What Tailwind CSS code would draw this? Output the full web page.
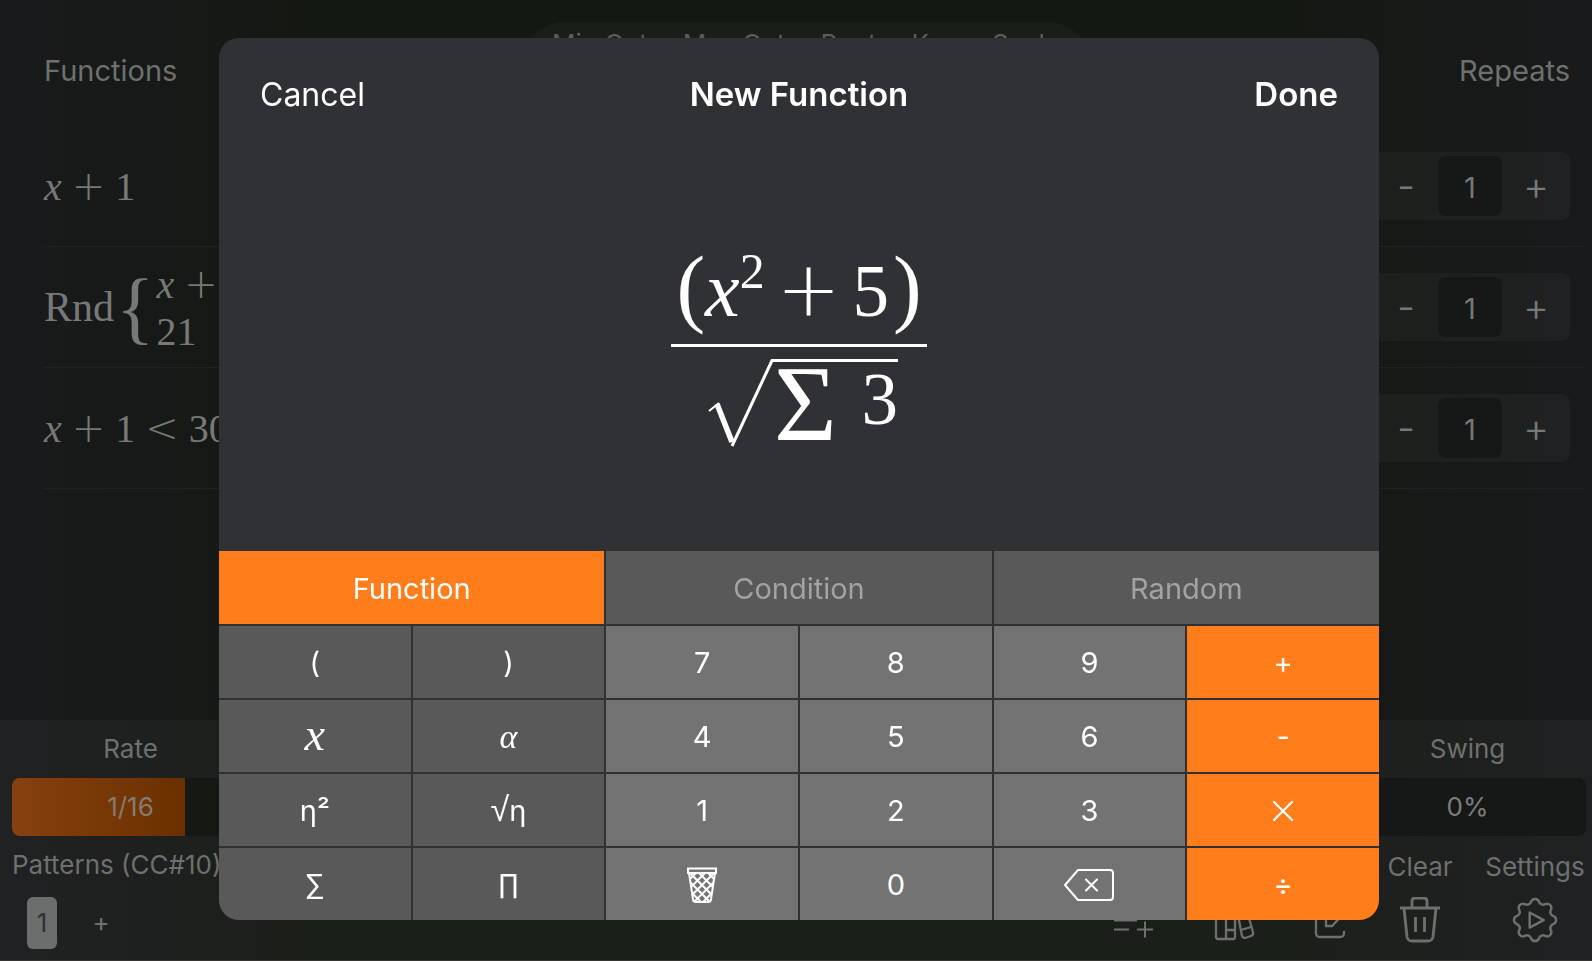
<!DOCTYPE html>
<html lang="en">
<head>
  <meta charset="UTF-8">
  <meta name="viewport" content="width=device-width, initial-scale=1.0">
  <title>New Function</title>
  <script src="https://cdn.jsdelivr.net/npm/@tailwindcss/browser@4"></script>
</head>
<body class="font-['Inter',sans-serif] text-[#6e706e]">
  <main class="relative flex min-h-screen flex-col overflow-hidden border-b border-[#36352f] bg-linear-to-r from-[#191a1c] via-[#141812] via-20% to-[#141812] to-80%">
    <div class="absolute inset-y-0 right-0 w-1/5 bg-linear-to-r from-[#141812] to-[#191a1c]"></div>

    <!-- scale settings pill -->
    <div class="absolute top-[22px] right-[500px] left-[520px] flex h-[90px] justify-between rounded-[45px] bg-[#1a1e18] px-8 pt-2 text-[26px] leading-[28px] text-[#5a5d58]">
      <span>Min Oct</span><span>Max Oct</span><span>Root</span><span>Key</span><span>Scale</span>
    </div>

    <!-- function list -->
    <section class="relative pl-[44px] pr-[6px]">
      <header class="flex h-[126px] items-center justify-between pr-4 pt-[16px] text-[29px]">
        <h2>Functions</h2>
        <h2>Repeats</h2>
      </header>
      <ul>
        <li class="flex h-[121px] items-center justify-between border-b border-[#1f2220] pr-4">
          <div class="font-['Liberation_Serif',serif] text-[40px] text-[#777976]"><i>x</i> <span class="font-['DejaVu_Sans',sans-serif] font-extralight">+</span> 1</div>
          <div class="grid h-[68px] w-[200px] grid-cols-3 rounded-lg bg-white/3 p-1 text-[29px] text-[#777977]">
            <button class="text-[40px] leading-none font-light" aria-label="Fewer">-</button>
            <output class="flex items-center justify-center rounded-lg bg-[#161817] pt-1">1</output>
            <button class="pl-1 text-[40px] leading-none font-light" aria-label="More">+</button>
          </div>
        </li>
        <li class="flex h-[121px] items-center justify-between border-b border-[#1f2220] pr-4">
          <div class="flex items-center gap-0.5 font-['Liberation_Serif',serif] text-[40px] text-[#777976]">
            <span class="text-[42px]">Rnd</span>
            <span class="text-[80px] leading-[100px]">{</span>
            <span class="pt-0.5 leading-[47px] whitespace-nowrap"><i>x</i> <span class="font-['DejaVu_Sans',sans-serif] font-extralight">+</span> 1<br>21</span>
          </div>
          <div class="grid h-[68px] w-[200px] grid-cols-3 rounded-lg bg-white/3 p-1 text-[29px] text-[#777977]">
            <button class="text-[40px] leading-none font-light" aria-label="Fewer">-</button>
            <output class="flex items-center justify-center rounded-lg bg-[#161817] pt-1">1</output>
            <button class="pl-1 text-[40px] leading-none font-light" aria-label="More">+</button>
          </div>
        </li>
        <li class="flex h-[121px] items-center justify-between border-b border-[#1f2220] pr-4">
          <div class="font-['Liberation_Serif',serif] text-[40px] text-[#777976]"><i>x</i> <span class="font-['DejaVu_Sans',sans-serif] font-extralight">+</span> 1 <span class="font-['DejaVu_Sans',sans-serif] font-extralight">&lt;</span> 30</div>
          <div class="grid h-[68px] w-[200px] grid-cols-3 rounded-lg bg-white/3 p-1 text-[29px] text-[#777977]">
            <button class="text-[40px] leading-none font-light" aria-label="Fewer">-</button>
            <output class="flex items-center justify-center rounded-lg bg-[#161817] pt-1">1</output>
            <button class="pl-1 text-[40px] leading-none font-light" aria-label="More">+</button>
          </div>
        </li>
      </ul>
    </section>

    <!-- bottom panel -->
    <footer class="relative mt-auto h-[240px] bg-white/3 px-3 pr-[6px] text-[26px]">
      <div class="flex justify-between">
        <div class="relative w-[237px]">
          <label for="rate" class="flex h-[58px] items-center justify-center pb-0.5">Rate</label>
          <input id="rate" type="range" value="73" class="block h-[58px] w-full appearance-none rounded-lg bg-linear-to-r from-[#86410f] from-0% via-[#6b3000] via-73% to-[#151813] to-73% [&::-webkit-slider-thumb]:w-0 [&::-webkit-slider-thumb]:appearance-none">
          <span class="pointer-events-none absolute inset-x-0 bottom-0 flex h-[58px] items-center justify-center pb-0.5 text-[#857b72]">1/16</span>
        </div>
        <div class="relative w-[237px]">
          <label for="swing" class="flex h-[58px] items-center justify-center pb-0.5">Swing</label>
          <input id="swing" type="range" value="0" class="block h-[58px] w-full appearance-none rounded-lg bg-[#161817] [&::-webkit-slider-thumb]:w-0 [&::-webkit-slider-thumb]:appearance-none">
          <span class="pointer-events-none absolute inset-x-0 bottom-0 flex h-[58px] items-center justify-center pb-0.5 text-[#7c7e7c]">0%</span>
        </div>
      </div>
      <div class="flex justify-between">
        <div>
          <h2 class="flex h-[58px] items-center pb-0.5 whitespace-nowrap">Patterns (CC#10)</h2>
          <div class="flex h-[58px] items-center gap-[30px] pl-[15px]">
            <button class="h-[52px] w-[30px] rounded-md bg-[#6c6e6e] pb-0.5 text-[#303232]">1</button>
            <button class="w-[28px] pb-1" aria-label="Add pattern">+</button>
          </div>
        </div>
        <div class="flex gap-[33px]">
          <button class="flex w-[70px] flex-col items-center pt-[61px]" aria-label="Add to list">
            <svg width="40" height="46" viewBox="0 0 40 46" fill="none" stroke="currentColor" stroke-width="2"><path d="M1 14H25M1 23.500H24M1 32.500H16M24 32.500H40M32 24.500V40.500"/></svg>
          </button>
          <button class="flex w-[66px] flex-col items-center pt-[61px]" aria-label="Library">
            <svg width="42" height="46" viewBox="0 0 42 46" fill="none" stroke="currentColor" stroke-width="2.300" stroke-linejoin="round"><path d="M3 10h10v30q0 2-2 2H5q-2 0-2-2ZM13 5h9v35q0 2-2 2h-9M13 33h9M24 13l9-2 7 24q1 3-2 4l-6 2q-2 0-3-2ZM28 33l10-3"/></svg>
          </button>
          <button class="flex w-[56px] flex-col items-center pt-[61px]" aria-label="Edit">
            <svg width="42" height="46" viewBox="0 0 42 46" fill="none" stroke="currentColor" stroke-width="2.300"><path d="M25 11H13q-4 0-4 4v21q0 4 4 4h20q4 0 4-4v-2M19 20v9h6L39 14l-6-6Z"/></svg>
          </button>
          <button class="flex w-[62px] flex-col items-center" aria-label="Clear">
            <span class="flex h-[61px] items-center">Clear</span>
            <svg width="42" height="46" viewBox="0 0 42 46" fill="none" stroke="currentColor" stroke-width="2.800" stroke-linejoin="round"><path d="M1 11H41M13 11V4q0-3 3-3h9q3 0 3 3v7M5 11l3 29q1 4 5 4h16q4 0 5-4l3-29M16.500 20V35M25.500 20V35"/></svg>
          </button>
          <button class="flex w-[102px] flex-col items-center" aria-label="Settings">
            <span class="flex h-[61px] items-center">Settings</span>
            <svg width="46" height="46" viewBox="0 0 46 46" fill="none" stroke="currentColor" stroke-width="2.300" stroke-linejoin="round"><path d="M19.400 5.900A3.900 3.900 0 0 1 26.600 5.900A4 4 0 0 0 32.500 8.300A3.900 3.900 0 0 1 37.700 13.500A4 4 0 0 0 40.100 19.400A3.900 3.900 0 0 1 40.100 26.600A4 4 0 0 0 37.700 32.500A3.900 3.900 0 0 1 32.500 37.700A4 4 0 0 0 26.600 40.100A3.900 3.900 0 0 1 19.400 40.100A4 4 0 0 0 13.500 37.700A3.900 3.900 0 0 1 8.300 32.500A4 4 0 0 0 5.900 26.600A3.900 3.900 0 0 1 5.900 19.400A4 4 0 0 0 8.300 13.500A3.900 3.900 0 0 1 13.500 8.300A4 4 0 0 0 19.400 5.900ZM18 16v14l13-7Z" transform="translate(-1.800 -1.800) scale(1.080)"/></svg>
          </button>
        </div>
      </div>
    </footer>
  </main>

  <!-- function editor -->
  <div class="fixed inset-0 flex pt-[38px] pr-[213px] pb-[41px] pl-[219px]">
    <div role="dialog" aria-labelledby="title" class="flex flex-1 flex-col overflow-hidden rounded-[20px] bg-[#303135] text-white">
      <header class="grid h-[112px] grid-cols-3 items-center px-[41px] pt-0.5 text-[33px]">
        <button class="justify-self-start text-[32px]">Cancel</button>
        <h1 id="title" class="text-center font-semibold whitespace-nowrap">New Function</h1>
        <button class="justify-self-end font-semibold">Done</button>
      </header>

      <div class="flex flex-1 justify-center pt-[94px] font-['Liberation_Serif',serif] text-[73px]">
        <div class="flex flex-col items-center">
          <div class="flex h-[100px] w-[256px] items-baseline justify-center leading-[86px]">
            <span class="text-[86px]">(</span>
            <i class="text-[78px]">x</i>
            <sup class="top-0 self-start text-[50px] leading-[54px]">2</sup>
            <span class="px-3 font-['DejaVu_Sans',sans-serif] text-[76px] font-extralight">+</span>
            <span class="pr-1">5</span>
            <span class="text-[86px]">)</span>
          </div>
          <div class="h-[3px] w-[256px] bg-white"></div>
          <div class="mt-3 flex pl-2">
            <svg width="66" height="88" viewBox="0 0 66 88" fill="none" stroke="#fff"><path stroke-width="2" d="M1 52 11 44"/><path stroke-width="5.500" d="M9 45 24 83"/><path stroke-width="3" d="M24 87 64 1.500H66"/></svg>
            <div class="flex h-[88px] w-[124px] justify-between border-t-3 border-white">
              <span class="text-[108px] leading-[84px]">Σ</span>
              <span class="leading-[76px]">3</span>
            </div>
          </div>
        </div>
      </div>

      <div class="grid grid-cols-6 gap-0.5 text-[29px] [&>button]:pt-0.5">
        <button class="col-span-2 h-[73px] bg-[#ff7d1a]">Function</button>
        <button class="col-span-2 h-[73px] bg-[#595959] text-[#a3a3a3]">Condition</button>
        <button class="col-span-2 h-[73px] bg-[#595959] text-[#a3a3a3]">Random</button>

        <button class="h-[72px] bg-[#595959]">(</button>
        <button class="h-[72px] bg-[#595959]">)</button>
        <button class="h-[72px] bg-[#737373]">7</button>
        <button class="h-[72px] bg-[#737373]">8</button>
        <button class="h-[72px] bg-[#737373]">9</button>
        <button class="h-[72px] bg-[#ff7d1a]">+</button>

        <button class="h-[72px] bg-[#595959] pb-1 font-['Liberation_Serif',serif] text-[46px] leading-none italic">x</button>
        <button class="h-[72px] bg-[#595959] font-['Liberation_Serif',serif] text-[34px] leading-none italic">α</button>
        <button class="h-[72px] bg-[#737373]">4</button>
        <button class="h-[72px] bg-[#737373]">5</button>
        <button class="h-[72px] bg-[#737373]">6</button>
        <button class="h-[72px] bg-[#ff7d1a]">-</button>

        <button class="h-[72px] bg-[#595959]">η²</button>
        <button class="h-[72px] bg-[#595959]"><span class="font-['DejaVu_Sans',sans-serif] text-[34px] leading-none font-extralight">√</span>η</button>
        <button class="h-[72px] bg-[#737373]">1</button>
        <button class="h-[72px] bg-[#737373]">2</button>
        <button class="h-[72px] bg-[#737373]">3</button>
        <button class="flex h-[72px] items-center justify-center bg-[#ff7d1a]" aria-label="Multiply">
          <svg width="22" height="22" viewBox="0 0 22 22" stroke="#fff" stroke-width="2.300" stroke-linecap="round"><path d="M2 2 20 20M20 2 2 20"/></svg>
        </button>

        <button class="h-[72px] bg-[#595959]">∑</button>
        <button class="h-[72px] bg-[#595959]">∏</button>
        <button class="flex h-[72px] items-center justify-center bg-[#737373]" aria-label="Clear all">
          <svg width="30" height="36" viewBox="0 0 30 36" fill="none" stroke="#fff" stroke-width="2">
            <clipPath id="basket"><path d="M2 6H28L24 34H6Z"/></clipPath>
            <path d="M1 1.500H29V6H1Z"/><path d="M2 6 6 32q0 3 3 3H21q3 0 3-3L28 6"/>
            <path clip-path="url(#basket)" d="M-25 5 5 35M-16 5 14 35M-7 5 23 35M2 5 32 35M11 5 41 35M20 5 50 35M10 5-20 35M19 5-11 35M28 5-2 35M37 5 7 35M46 5 16 35"/>
          </svg>
        </button>
        <button class="h-[72px] bg-[#737373]">0</button>
        <button class="flex h-[72px] items-center justify-center bg-[#737373]" aria-label="Delete">
          <svg width="50" height="32" viewBox="0 0 50 32" fill="none" stroke="#fff" stroke-width="2" stroke-linejoin="round" stroke-linecap="round"><path d="M14 1H46q3 0 3 3V28q0 3-3 3H14L1 16ZM22 10.500 33 21.500M33 10.500 22 21.500"/></svg>
        </button>
        <button class="h-[72px] bg-[#ff7d1a]">÷</button>
      </div>
    </div>
  </div>
</body>
</html>
